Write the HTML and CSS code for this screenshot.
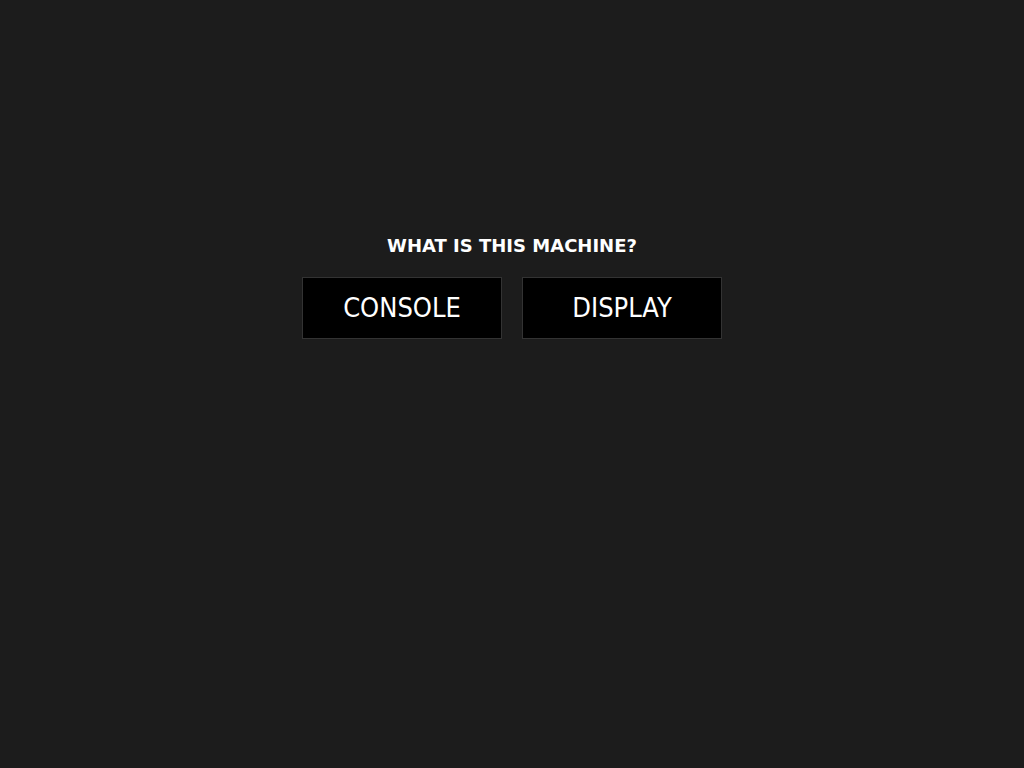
FILE: index.html
```html
<!DOCTYPE html>
<html>
<head>
<meta charset="utf-8">
<link rel="stylesheet" href="styles.css">
</head>
<body>
<main class="setup">
  <h1 class="question">WHAT IS THIS MACHINE?</h1>
  <div class="choices">
    <button class="choice">CONSOLE</button>
    <button class="choice">DISPLAY</button>
  </div>
</main>
</body>
</html>
```
FILE: styles.css
```css
html, body {
  margin: 0;
  padding: 0;
  background: #1c1c1c;
  height: 100%;
}
body {
  font-family: "DejaVu Sans", Verdana, sans-serif;
  color: #ffffff;
}
.setup {
  display: flex;
  flex-direction: column;
  align-items: center;
  padding-top: 234px;
}
.question {
  margin: 0;
  font-size: 18px;
  font-weight: bold;
  line-height: 24px;
  letter-spacing: 0;
}
.choices {
  display: flex;
  gap: 20px;
  margin-top: 19px;
}
.choice {
  width: 200px;
  height: 62px;
  box-sizing: border-box;
  background: #000;
  border: 1px solid #333333;
  color: #fff;
  font-family: "DejaVu Sans Condensed", "DejaVu Sans", sans-serif;
  font-stretch: condensed;
  font-size: 27px;
  padding: 0 0 1px 0;
  margin: 0;
}
```
